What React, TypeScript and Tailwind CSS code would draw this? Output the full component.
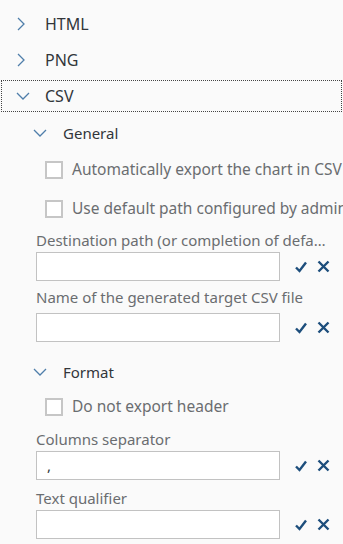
import React from 'react';

const ChevronRight = () => (
  <svg width="10" height="16" viewBox="0 0 10 16" className="shrink-0">
    <path d="M2 2 L8 8 L2 14" fill="none" stroke="#4f7eaa" strokeWidth="1.3" />
  </svg>
);

const ChevronDown = () => (
  <svg width="14" height="10" viewBox="0 0 14 10" className="shrink-0">
    <path d="M1 2 L7 8 L13 2" fill="none" stroke="#4f7eaa" strokeWidth="1.3" />
  </svg>
);

const Actions = () => (
  <div className="flex items-center gap-[10px] ml-[15px]">
    <svg width="12" height="12" viewBox="0 0 12 12">
      <path d="M1 6.5 L4.5 10 L11 1.5" fill="none" stroke="#1d4e7c" strokeWidth="2.4" />
    </svg>
    <svg width="13" height="13" viewBox="0 0 13 13">
      <path d="M1.5 1.5 L11.5 11.5 M11.5 1.5 L1.5 11.5" fill="none" stroke="#1d4e7c" strokeWidth="2.4" />
    </svg>
  </div>
);

function Field({ value = '' }: { value?: string }) {
  return (
    <div className="flex items-center pl-[36px]">
      <div className="w-[244px] h-[29px] border border-[#c2c2c2] bg-white flex items-center px-[10px] text-[15px] text-[#32363a]">
        {value}
      </div>
      <Actions />
    </div>
  );
}

function Check({ label, h }: { label: string; h: string }) {
  return (
    <div className={`flex items-center pl-[45px] ${h} whitespace-nowrap`}>
      <div className="w-[18px] h-[18px] border-2 border-[#c6c6c6] bg-white shrink-0" />
      <span className="ml-[9px] text-[15.5px] text-[#6a6d70]">{label}</span>
    </div>
  );
}

export default function App() {
  return (
    <div
      className="w-[343px] h-[544px] overflow-hidden bg-[#fafafa] pt-[6px] text-[15px]"
      style={{ fontFamily: '"Noto Sans", "Open Sans", sans-serif' }}
    >
      <div className="flex items-center h-[36px] pl-[16px] text-[16px] text-[#32363a]">
        <ChevronRight />
        <span className="ml-[19px]">HTML</span>
      </div>
      <div className="flex items-center h-[36px] pl-[16px] text-[16px] text-[#32363a]">
        <ChevronRight />
        <span className="ml-[19px]">PNG</span>
      </div>
      <div className="flex items-center h-[32px] mx-[1px] mt-[2px] border border-dotted border-[#444] pl-[14px] text-[16px] text-[#32363a]">
        <ChevronDown />
        <span className="ml-[15px]">CSV</span>
      </div>

      <div className="flex items-center h-[34px] mt-[4px] pl-[33px] text-[#32363a]">
        <ChevronDown />
        <span className="ml-[16px]">General</span>
      </div>
      <Check label="Automatically export the chart in CSV format" h="h-[40px]" />
      <Check label="Use default path configured by administrator" h="h-[38px]" />
      <div className="flex items-center h-[24px] pl-[36px] text-[#6a6d70]">
        <span className="w-[292px] truncate">Destination path (or completion of default path)</span>
      </div>
      <Field />
      <div className="flex items-center h-[32px] pl-[36px] text-[#6a6d70]">
        <span>Name of the generated target CSV file</span>
      </div>
      <Field />

      <div className="flex items-center h-[28px] mt-[16px] pl-[33px] text-[#32363a]">
        <ChevronDown />
        <span className="ml-[16px]">Format</span>
      </div>
      <Check label="Do not export header" h="h-[42px]" />
      <div className="flex items-center h-[23px] pl-[36px] text-[#6a6d70]">
        <span>Columns separator</span>
      </div>
      <Field value="," />
      <div className="flex items-center h-[30px] pt-[6px] pl-[36px] text-[#6a6d70]">
        <span>Text qualifier</span>
      </div>
      <Field />
    </div>
  );
}
